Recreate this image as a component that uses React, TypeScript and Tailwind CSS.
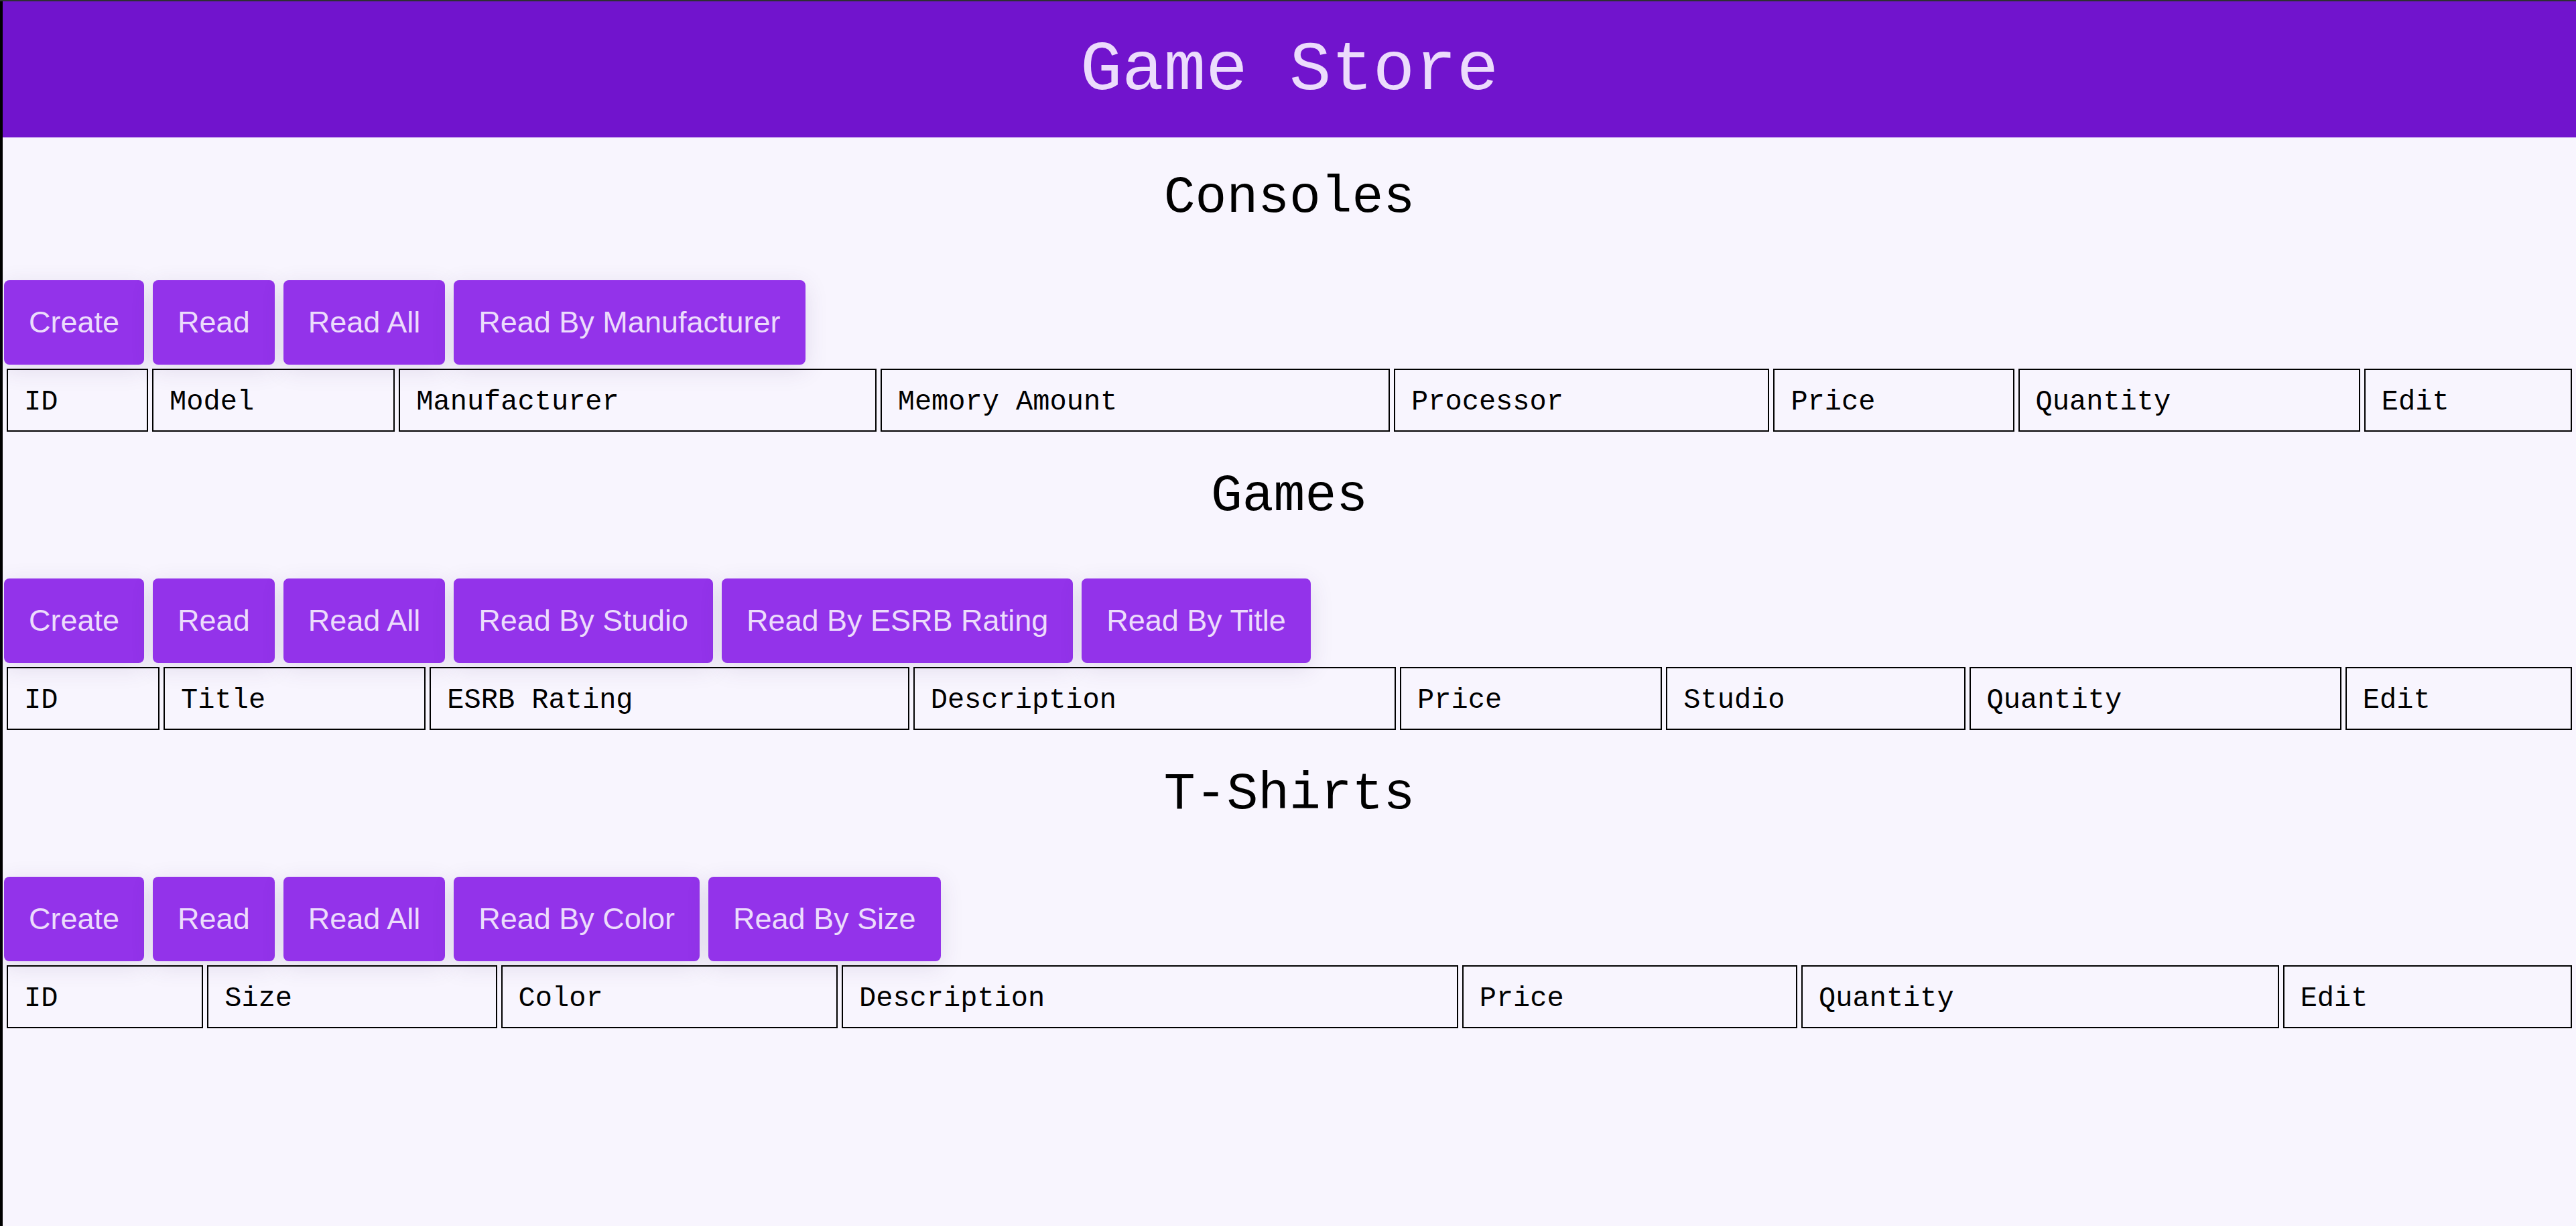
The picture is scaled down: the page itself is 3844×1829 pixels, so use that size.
import React from "react";

type Section = {
  title: string;
  buttons: string[];
  cols: string[];
  grid: string;
};

const sections: Section[] = [
  {
    title: "Consoles",
    buttons: ["Create", "Read", "Read All", "Read By Manufacturer"],
    cols: ["ID", "Model", "Manufacturer", "Memory Amount", "Processor", "Price", "Quantity", "Edit"],
    grid: "grid-cols-[211fr_362fr_712fr_760fr_560fr_359fr_510fr_310fr]",
  },
  {
    title: "Games",
    buttons: ["Create", "Read", "Read All", "Read By Studio", "Read By ESRB Rating", "Read By Title"],
    cols: ["ID", "Title", "ESRB Rating", "Description", "Price", "Studio", "Quantity", "Edit"],
    grid: "grid-cols-[228fr_391fr_715fr_720fr_391fr_446fr_555fr_338fr]",
  },
  {
    title: "T-Shirts",
    buttons: ["Create", "Read", "Read All", "Read By Color", "Read By Size"],
    cols: ["ID", "Size", "Color", "Description", "Price", "Quantity", "Edit"],
    grid: "grid-cols-[293fr_432fr_502fr_919fr_500fr_712fr_431fr]",
  },
];

function SectionBlock({ s }: { s: Section }) {
  return (
    <section>
      <h2 className="mt-[46px] mb-[79px] text-center text-[78px] leading-[88px] font-normal text-black font-['Liberation_Mono',monospace]">
        {s.title}
      </h2>
      <div className="flex gap-[13px] pl-[2px]">
        {s.buttons.map((b) => (
          <button
            key={b}
            className="rounded-[8px] bg-[#9333ea] px-[37px] py-[38px] text-[45px] leading-[50px] text-[#ecdcfc] font-['Liberation_Sans',Arial,sans-serif] shadow-[0_8px_34px_rgba(70,50,110,0.13)]"
          >
            {b}
          </button>
        ))}
      </div>
      <div className={`grid ${s.grid} gap-[6px] p-[6px]`}>
        {s.cols.map((c) => (
          <div
            key={c}
            className="border-2 border-black pl-[24px] pt-[24px] pb-[18px] text-[42px] leading-[48px] text-black font-['Liberation_Mono',monospace] whitespace-nowrap"
          >
            {c}
          </div>
        ))}
      </div>
    </section>
  );
}

export default function App() {
  return (
    <div className="min-h-screen border-t-[2px] border-[#2e2f33] flex bg-[#f8f5fe]">
      <div className="w-[4px] shrink-0 bg-black" />
      <div className="flex-1 min-w-0">
        <header className="h-[203px] bg-[#7114cd] pt-[44px]">
          <h1 className="text-center text-[104px] leading-[118px] font-normal text-[#ecdcfc] font-['Liberation_Mono',monospace]">
            Game Store
          </h1>
        </header>
        {sections.map((s) => (
          <SectionBlock key={s.title} s={s} />
        ))}
      </div>
    </div>
  );
}
